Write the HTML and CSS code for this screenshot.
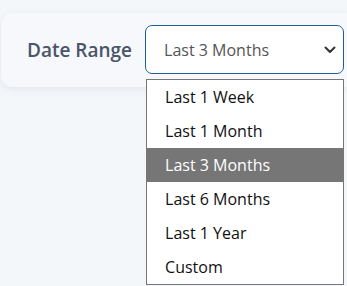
FILE: index.html
```html
<!DOCTYPE html>
<html lang="en">
<head>
<meta charset="utf-8">
<title>Date Range</title>
<link rel="stylesheet" href="styles.css">
</head>
<body>
<div class="card">
  <label class="label" for="range">Date Range</label>
  <div class="select-wrap">
    <div class="select" id="range">
      <span class="value">Last 3 Months</span>
      <svg class="chevron" width="12" height="8" viewBox="0 0 12 8"><path d="M1.5 1.5 L6 6 L10.5 1.5" fill="none" stroke="#333" stroke-width="2" stroke-linecap="round" stroke-linejoin="round"/></svg>
    </div>
    <ul class="listbox">
      <li class="option">Last 1 Week</li>
      <li class="option">Last 1 Month</li>
      <li class="option selected">Last 3 Months</li>
      <li class="option">Last 6 Months</li>
      <li class="option">Last 1 Year</li>
      <li class="option">Custom</li>
    </ul>
  </div>
</div>
</body>
</html>
```
FILE: styles.css
```css
html {
  height: 100%;
  background: #f4f7fa;
}
body {
  margin: 0;
  height: 100%;
  box-sizing: border-box;
  padding: 13px 0 0 1px;
  font-family: "Open Sans", "Noto Sans", sans-serif;
}
.card {
  display: flex;
  align-items: center;
  gap: 13px;
  padding: 12px 0 13px 26px;
  background: #f6f8fb;
  border-radius: 12px 0 0 12px;
  box-shadow: 0 2px 8px rgba(30, 50, 80, 0.08);
}
.label {
  font-size: 19px;
  font-weight: 600;
  color: #4a5568;
}
.select-wrap {
  position: relative;
}
.select {
  width: 199px;
  height: 49px;
  box-sizing: border-box;
  border: 1px solid #1f5f99;
  border-radius: 7px;
  background: #fff;
  display: flex;
  align-items: center;
  justify-content: space-between;
  padding: 0 7px 0 18px;
  font-size: 16px;
  color: #555;
}
.chevron {
  display: block;
}
.listbox {
  position: absolute;
  top: 54px;
  left: 1px;
  width: 198px;
  box-sizing: border-box;
  margin: 0;
  padding: 0;
  list-style: none;
  background: #fff;
  border: 1px solid #767676;
}
.option {
  height: 34px;
  display: flex;
  align-items: center;
  padding-left: 18px;
  font-size: 16px;
  color: #111;
}
.option.selected {
  background: #767676;
  color: #fff;
}
```
